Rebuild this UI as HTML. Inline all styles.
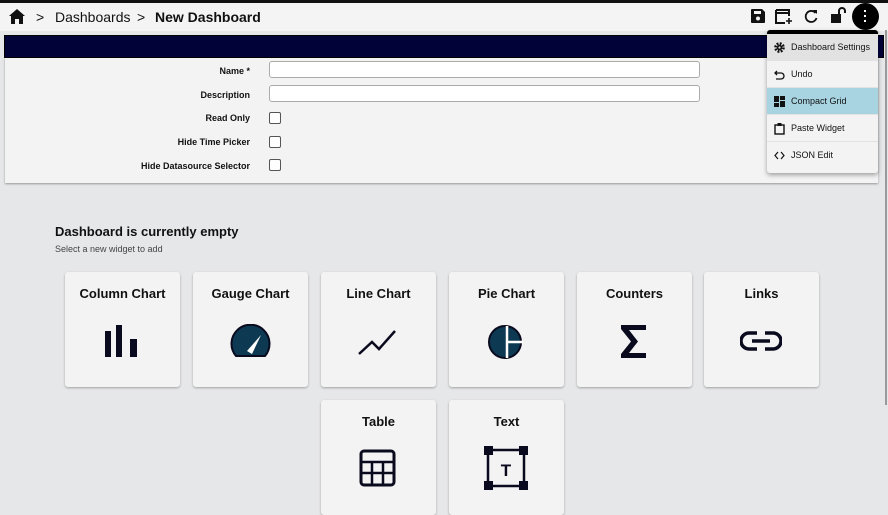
<!DOCTYPE html>
<html><head><meta charset="utf-8"><style>
*{box-sizing:border-box;margin:0;padding:0}
body{width:888px;height:502px;overflow:hidden;background:#e6e7e9;font-family:"Liberation Sans",sans-serif;position:relative;color:#111}
.top{position:absolute;left:0;top:0;width:888px;height:3px;background:#111}
.hdr{position:absolute;left:0;top:3px;width:888px;height:28px;background:#f4f4f4}
.crumb{position:absolute;top:6px;font-size:14px}
.nav{position:absolute;left:4px;top:35px;width:880px;height:23px;background:#000238;border:1px solid #000}
.panel{position:absolute;left:5px;top:58px;width:873px;height:125px;background:#f3f3f3;box-shadow:0 1px 2px rgba(0,0,0,.35)}
.lbl{position:absolute;right:628px;font-size:9px;font-weight:bold;text-align:right;white-space:nowrap}
.inp{position:absolute;left:264px;width:431px;height:17px;background:#fff;border:1px solid #aaa;border-radius:3px}
.cb{position:absolute;left:264px;width:12px;height:12px;background:#fff;border:1px solid #555;border-radius:2px}
.card{position:absolute;width:115px;height:115px;background:#f3f3f3;border-radius:3px;box-shadow:0 1px 2px rgba(0,0,0,.3);text-align:center}
.card h3{font-size:13px;font-weight:bold;margin-top:14px}
.card svg{position:absolute}
.menu{position:absolute;left:767px;top:30px;width:111px;height:143px;background:#f3f3f3;border-top:4px solid #000;border-radius:3px;box-shadow:0 2px 5px rgba(0,0,0,.35)}
.mi{height:27px;font-size:9px;padding-left:24px;line-height:27px;position:relative;border-bottom:1px solid #e2e2e2}
.mi svg{position:absolute;left:7px;top:8px}
</style></head><body>
<div class="top"></div>
<div class="hdr">
<svg style="position:absolute;left:9px;top:6px" width="16" height="15" viewBox="0 0 16 15"><path d="M8 0L0 7h2v8h4v-5h4v5h4V7h2z" fill="#111"/></svg>
<span class="crumb" style="left:36px">&gt;</span>
<span class="crumb" style="left:55px">Dashboards</span>
<span class="crumb" style="left:137px">&gt;</span>
<span class="crumb" style="left:155px;font-weight:bold">New Dashboard</span>
<svg style="position:absolute;left:751px;top:6px" width="14" height="14" viewBox="0 0 14 14"><path d="M1 0h10l3 3v10a1 1 0 0 1-1 1H1a1 1 0 0 1-1-1V1a1 1 0 0 1 1-1z" fill="#111"/><rect x="3" y="2" width="7" height="3" fill="#f4f4f4"/><circle cx="7" cy="9.5" r="2" fill="#f4f4f4"/></svg>
<svg style="position:absolute;left:775px;top:6px" width="18" height="16" viewBox="0 0 18 16"><path d="M1 1h13v6M1 1v13h9M1 4h13" fill="none" stroke="#111" stroke-width="2"/><path d="M14 9v6M11 12h6" stroke="#111" stroke-width="1.6"/></svg>
<svg style="position:absolute;left:804px;top:6px" width="14" height="14" viewBox="0 0 14 14"><path d="M11.5 4A5.5 5.5 0 1 0 12.5 9" fill="none" stroke="#111" stroke-width="1.8"/><path d="M9 1l4 0 0 4z" fill="#111"/></svg>
<svg style="position:absolute;left:831px;top:4px" width="16" height="16" viewBox="0 0 16 16"><rect x="0" y="7" width="10" height="9" fill="#111"/><path d="M8 7V4a3 3 0 0 1 6 0v2" fill="none" stroke="#111" stroke-width="2"/></svg>
<div style="position:absolute;left:852px;top:0px;width:27px;height:27px;border-radius:50%;background:#000"></div>
<div style="position:absolute;left:864px;top:7px;width:2px;height:2px;background:#fff;box-shadow:0 5px 0 #fff,0 10px 0 #fff"></div>
</div>
<div class="nav"></div>
<div class="panel">
<div class="lbl" style="top:8px">Name *</div><div class="inp" style="top:3px"></div>
<div class="lbl" style="top:32px">Description</div><div class="inp" style="top:27px"></div>
<div class="lbl" style="top:55px">Read Only</div><div class="cb" style="top:54px"></div>
<div class="lbl" style="top:79px">Hide Time Picker</div><div class="cb" style="top:78px"></div>
<div class="lbl" style="top:103px">Hide Datasource Selector</div><div class="cb" style="top:101px"></div>
</div>
<div style="position:absolute;left:55px;top:224px;font-size:13px;font-weight:bold">Dashboard is currently empty</div>
<div style="position:absolute;left:55px;top:244px;font-size:9px;color:#444">Select a new widget to add</div>

<div class="card" style="left:65px;top:272px"><h3>Column Chart</h3><svg style="left:40px;top:53px" width="34" height="32" viewBox="0 0 34 32"><rect x="0" y="6" width="6" height="26" fill="#0a0a1e"/><rect x="11" y="0" width="6" height="32" fill="#0a0a1e"/><rect x="25" y="14" width="7" height="18" fill="#0a0a1e"/></svg></div>
<div class="card" style="left:193px;top:272px"><h3>Gauge Chart</h3><svg style="left:37px;top:52px" width="42" height="34" viewBox="0 0 42 34"><path d="M6 32A19 19 0 1 1 35 32z" fill="#0d3a52" stroke="#0a0a1e" stroke-width="2"/><path d="M17 27L31 11 22 30z" fill="#fff"/></svg></div>
<div class="card" style="left:321px;top:272px"><h3>Line Chart</h3><svg style="left:36px;top:55px" width="42" height="30" viewBox="0 0 42 30"><path d="M2 27L15 15l7 7L38 4" fill="none" stroke="#0a0a1e" stroke-width="2.5"/></svg></div>
<div class="card" style="left:449px;top:272px"><h3>Pie Chart</h3><svg style="left:38px;top:52px" width="36" height="36" viewBox="0 0 36 36"><circle cx="18" cy="18" r="16" fill="#0d3a52" stroke="#0a0a1e" stroke-width="2"/><path d="M20 2v32M20 18h16" stroke="#fff" stroke-width="2.5"/></svg></div>
<div class="card" style="left:577px;top:272px"><h3>Counters</h3><svg style="left:43px;top:53px" width="28" height="33" viewBox="0 0 28 33"><path d="M1 0h25v5H9l9 11.5L9 28h17v5H1v-4l10-12.5L1 4z" fill="#0a0a1e"/></svg></div>
<div class="card" style="left:704px;top:272px"><h3>Links</h3><svg style="left:36px;top:58px" width="42" height="22" viewBox="0 0 42 22"><path d="M17 3h-8a8 8 0 0 0 0 16h8M25 3h8a8 8 0 0 1 0 16h-8M12 11h18" fill="none" stroke="#0a0a1e" stroke-width="3.5"/></svg></div>
<div class="card" style="left:321px;top:400px"><h3>Table</h3><svg style="left:38px;top:49px" width="38" height="38" viewBox="0 0 38 38"><rect x="2" y="2" width="33" height="34" rx="3" fill="none" stroke="#0a0a1e" stroke-width="3"/><path d="M2 13h33M2 24h33M13 13v23M24 13v23" stroke="#0a0a1e" stroke-width="2.5"/></svg></div>
<div class="card" style="left:449px;top:400px"><h3>Text</h3><svg style="left:35px;top:46px" width="45" height="45" viewBox="0 0 45 45"><rect x="4" y="4" width="36" height="36" fill="none" stroke="#0a0a1e" stroke-width="2.5"/><rect x="0" y="0" width="9" height="9" fill="#0a0a1e"/><rect x="35" y="0" width="9" height="9" fill="#0a0a1e"/><rect x="0" y="35" width="9" height="9" fill="#0a0a1e"/><rect x="35" y="35" width="9" height="9" fill="#0a0a1e"/><text x="22" y="30" text-anchor="middle" font-family="Liberation Sans" font-weight="bold" font-size="17" fill="#0a0a1e">T</text></svg></div>

<div class="menu">
<div class="mi" style="background:#e2e2e2"><svg width="11" height="11" viewBox="0 0 12 12"><circle cx="6" cy="6" r="4.3" fill="none" stroke="#111" stroke-width="3" stroke-dasharray="2 1.4"/><circle cx="6" cy="6" r="3" fill="#111"/><circle cx="6" cy="6" r="1.2" fill="#e2e2e2"/></svg>Dashboard Settings</div>
<div class="mi"><svg width="11" height="11" viewBox="0 0 11 11"><path d="M3 2L1 4l2 2M1 4h6a3 3 0 0 1 0 6H2" fill="none" stroke="#111" stroke-width="1.3"/></svg>Undo</div>
<div class="mi" style="background:#a8d4e2"><svg width="11" height="11" viewBox="0 0 11 11"><rect x="0" y="0" width="5" height="6" fill="#111"/><rect x="6" y="0" width="5" height="4" fill="#111"/><rect x="0" y="7" width="5" height="4" fill="#111"/><rect x="6" y="5" width="5" height="6" fill="#111"/></svg>Compact Grid</div>
<div class="mi"><svg width="11" height="12" viewBox="0 0 11 12"><rect x="1" y="2" width="9" height="9" fill="none" stroke="#111" stroke-width="1.4"/><rect x="3.5" y="0" width="4" height="3" fill="#111"/></svg>Paste Widget</div>
<div class="mi" style="border:0"><svg width="11" height="11" viewBox="0 0 11 11"><path d="M4 2L1 5.5 4 9M7 2l3 3.5L7 9" fill="none" stroke="#111" stroke-width="1.2"/></svg>JSON Edit</div>
</div>
<div style="position:absolute;left:885px;top:30px;width:2px;height:375px;background:#999"></div>
</body></html>
